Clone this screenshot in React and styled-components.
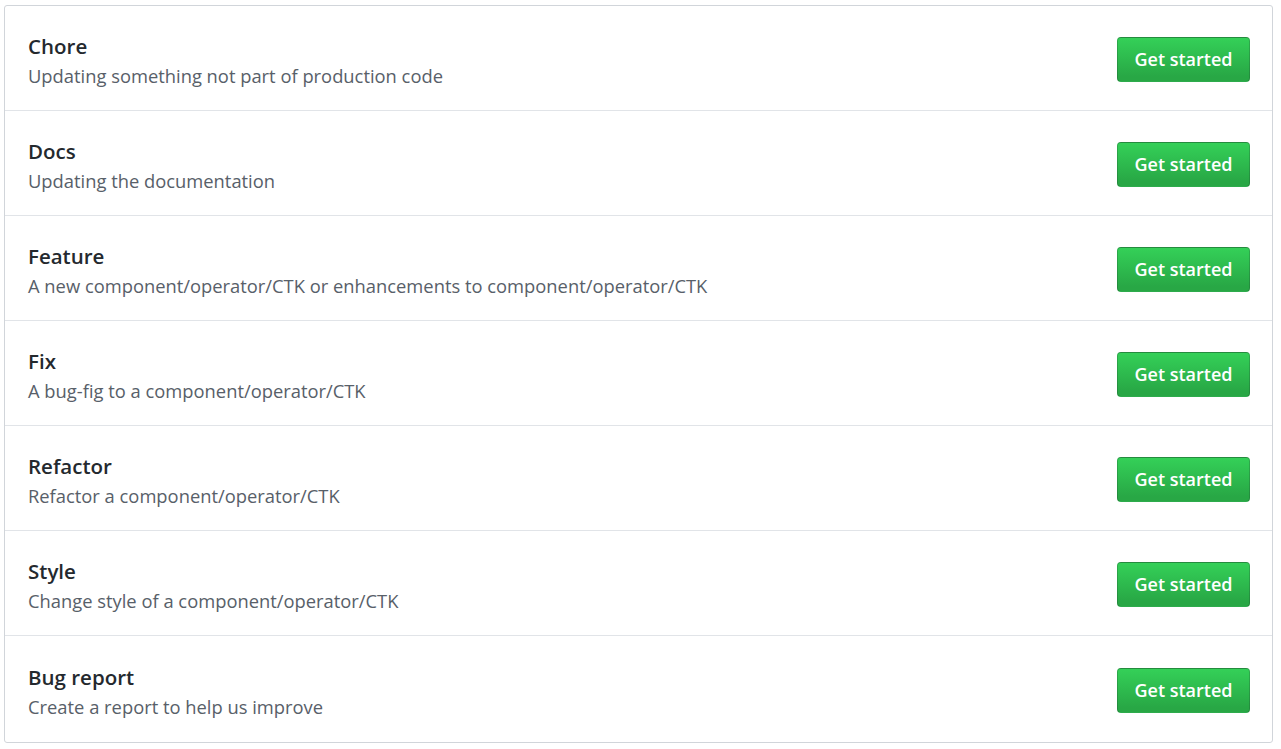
import React from 'react';
import styled, { createGlobalStyle } from 'styled-components';

const GlobalStyle = createGlobalStyle`
  body {
    margin: 0;
    background: #fff;
    font-family: "Open Sans", "Noto Sans", "Liberation Sans", sans-serif;
    -webkit-font-smoothing: antialiased;
  }
`;

const Page = styled.div`
  padding: 5px 8px 0 4px;
`;

const List = styled.div`
  border: 1px solid #d1d5da;
  border-radius: 3px;
  background: #fff;
`;

const Row = styled.div`
  display: flex;
  align-items: center;
  justify-content: space-between;
  box-sizing: border-box;
  height: ${(p) => (p.$first ? 104 : p.$last ? 107 : 105)}px;
  padding: 0 22px 0 23px;
  border-top: ${(p) => (p.$first ? 'none' : '1px solid #e1e4e8')};
`;

const Text = styled.div`
  display: flex;
  flex-direction: column;
  padding-top: 3px;
`;

const Title = styled.h3`
  margin: 0;
  font-size: 20.5px;
  font-weight: 600;
  line-height: 30px;
  color: #24292e;
`;

const Description = styled.p`
  margin: 2px 0 0;
  font-size: 18.35px;
  line-height: 26px;
  color: #586069;
`;

const Button = styled.button`
  width: 133px;
  height: 45px;
  margin-top: 2px;
  padding: 0;
  border: 1px solid rgba(27, 31, 35, 0.2);
  border-radius: 4px;
  background-color: #28a745;
  background-image: linear-gradient(-180deg, #34d058 0%, #28a745 90%);
  color: #fff;
  font-family: inherit;
  font-size: 18px;
  font-weight: 600;
  cursor: pointer;
`;

const templates = [
  { title: 'Chore', description: 'Updating something not part of production code' },
  { title: 'Docs', description: 'Updating the documentation' },
  { title: 'Feature', description: 'A new component/operator/CTK or enhancements to component/operator/CTK' },
  { title: 'Fix', description: 'A bug-fig to a component/operator/CTK' },
  { title: 'Refactor', description: 'Refactor a component/operator/CTK' },
  { title: 'Style', description: 'Change style of a component/operator/CTK' },
  { title: 'Bug report', description: 'Create a report to help us improve' },
];

const App = () => (
  <Page>
    <GlobalStyle />
    <List>
      {templates.map((t, i) => (
        <Row key={t.title} $first={i === 0} $last={i === templates.length - 1}>
          <Text>
            <Title>{t.title}</Title>
            <Description>{t.description}</Description>
          </Text>
          <Button type="button">Get started</Button>
        </Row>
      ))}
    </List>
  </Page>
);

export default App;
